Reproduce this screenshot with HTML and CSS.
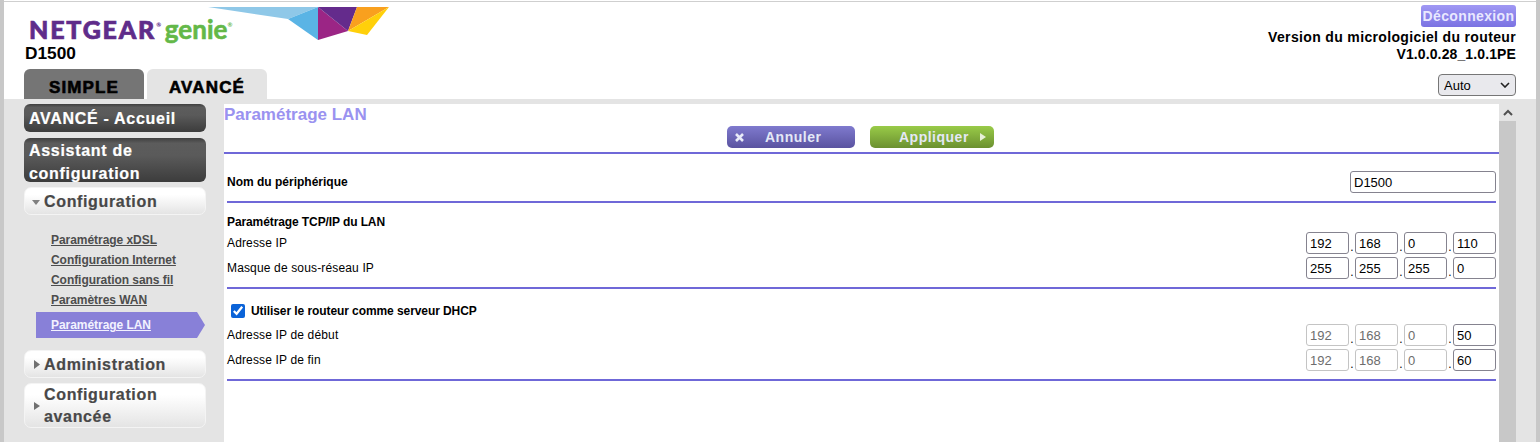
FILE: index.html
```html
<!DOCTYPE html>
<html lang="fr">
<head>
    <meta charset="UTF-8">
    <title>NETGEAR genie - Paramétrage LAN</title>
    <link rel="stylesheet" href="styles.css">
</head>
<body>
    <div class="page">
        <!-- Header -->
        <div class="header">
            <div class="header-left">
                <div class="logo">
                    <span class="logo-netgear">NETGEAR<sup>®</sup></span>
                    <span class="logo-genie">genie<sup>®</sup></span>
                    <svg class="logo-shard" width="182" height="34" viewBox="207 6 182 34">
                        <polygon points="208,7 318,7 288,19" fill="#8fc8e8"/>
                        <polygon points="288,19 318,7 318,40" fill="#5ab4e5"/>
                        <polygon points="318,7 348,31 318,40" fill="#9b2585"/>
                        <polygon points="318,7 357,7 348,31" fill="#642b8c"/>
                        <polygon points="357,7 389,7 348,31" fill="#f9a01e"/>
                        <polygon points="348,31 389,7 367,35" fill="#ffd00a"/>
                    </svg>
                </div>
                <div class="model">D1500</div>
                <div class="tabs">
                    <div class="tab tab-simple">SIMPLE</div>
                    <div class="tab tab-advanced">AVANCÉ</div>
                </div>
            </div>
            <div class="header-right">
                <a class="logout">Déconnexion</a>
                <div class="firmware">Version du micrologiciel du routeur</div>
                <div class="firmware firmware-version">V1.0.0.28_1.0.1PE</div>
                <div class="lang-box">
                    <select class="lang">
                        <option>Auto</option>
                    </select>
                    <svg class="lang-arrow" width="10" height="6" viewBox="0 0 10 6"><path d="M1 1 L5 5 L9 1" fill="none" stroke="#222" stroke-width="1.6"/></svg>
                </div>
            </div>
        </div>

        <div class="panel">
            <!-- Sidebar -->
            <div class="sidebar">
                <div class="nav-dark">AVANCÉ - Accueil</div>
                <div class="nav-dark">Assistant de configuration</div>
                <div class="nav-light">
                    <svg class="arrow" width="8" height="6" viewBox="0 0 8 6"><polygon points="0,1 8,1 4,6" fill="#808080"/></svg>
                    <span>Configuration</span>
                </div>
                <div class="sub-menu">
                    <a class="sub-link">Paramétrage xDSL</a>
                    <a class="sub-link">Configuration Internet</a>
                    <a class="sub-link">Configuration sans fil</a>
                    <a class="sub-link">Paramètres WAN</a>
                    <a class="sub-link sub-link-active">Paramétrage LAN</a>
                </div>
                <div class="nav-light">
                    <svg class="arrow arrow-right" width="6" height="9" viewBox="0 0 6 9"><polygon points="0,0 6,4.5 0,9" fill="#707070"/></svg>
                    <span>Administration</span>
                </div>
                <div class="nav-light nav-light-tall">
                    <svg class="arrow arrow-right" width="6" height="8" viewBox="0 0 6 8"><polygon points="0,0 6,4 0,8" fill="#707070"/></svg>
                    <span>Configuration avancée</span>
                </div>
            </div>

            <!-- Main content -->
            <div class="main">
                <div class="title">Paramétrage LAN</div>
                <div class="actions">
                    <button class="btn btn-cancel">
                        <svg width="9" height="9" viewBox="0 0 9 9"><path d="M1 1 L8 8 M8 1 L1 8" stroke="#e8ebf8" stroke-width="2.6"/></svg>
                        <span>Annuler</span>
                    </button>
                    <button class="btn btn-apply">
                        <span>Appliquer</span>
                        <svg width="6" height="8" viewBox="0 0 6 8"><polygon points="0,0 6,4 0,8" fill="#e8f0d8"/></svg>
                    </button>
                </div>
                <div class="rule rule-top"></div>

                <div class="form">
                    <div class="row row-name">
                        <label class="label-bold">Nom du périphérique</label>
                        <input class="field field-name" type="text" value="D1500">
                    </div>
                    <div class="rule"></div>

                    <div class="section-title">Paramétrage TCP/IP du LAN</div>
                    <div class="row">
                        <label>Adresse IP</label>
                        <div class="ip">
                            <input class="field" type="text" value="192"><span>.</span>
                            <input class="field" type="text" value="168"><span>.</span>
                            <input class="field" type="text" value="0"><span>.</span>
                            <input class="field" type="text" value="110">
                        </div>
                    </div>
                    <div class="row">
                        <label>Masque de sous-réseau IP</label>
                        <div class="ip">
                            <input class="field" type="text" value="255"><span>.</span>
                            <input class="field" type="text" value="255"><span>.</span>
                            <input class="field" type="text" value="255"><span>.</span>
                            <input class="field" type="text" value="0">
                        </div>
                    </div>
                    <div class="rule"></div>

                    <label class="dhcp">
                        <input type="checkbox" checked>
                        <span>Utiliser le routeur comme serveur DHCP</span>
                    </label>
                    <div class="row">
                        <label>Adresse IP de début</label>
                        <div class="ip">
                            <input class="field" type="text" value="192" disabled><span>.</span>
                            <input class="field" type="text" value="168" disabled><span>.</span>
                            <input class="field" type="text" value="0" disabled><span>.</span>
                            <input class="field" type="text" value="50">
                        </div>
                    </div>
                    <div class="row">
                        <label>Adresse IP de fin</label>
                        <div class="ip">
                            <input class="field" type="text" value="192" disabled><span>.</span>
                            <input class="field" type="text" value="168" disabled><span>.</span>
                            <input class="field" type="text" value="0" disabled><span>.</span>
                            <input class="field" type="text" value="60">
                        </div>
                    </div>
                    <div class="rule"></div>
                </div>
            </div>

            <!-- Scrollbar -->
            <div class="scrollbar">
                <div class="scroll-up">
                    <svg width="10" height="7" viewBox="0 0 10 7"><path d="M1 6 L5 2 L9 6" fill="none" stroke="#505050" stroke-width="2"/></svg>
                </div>
            </div>
        </div>
    </div>
</body>
</html>
```

FILE: styles.css
```css
* {
    margin: 0;
    padding: 0;
    box-sizing: border-box;
}

html, body {
    height: 442px;
    overflow: hidden;
}

body {
    background: #fff;
    color: #000;
    font-family: "Liberation Sans", Arial, sans-serif;
}

.page {
    height: 442px;
    border-left: 4px solid #c8c8c8;
    border-right: 4px solid #c8c8c8;
    display: flex;
    flex-direction: column;
}

/* Header */
.header {
    height: 98px;
    margin-top: 1px;
    border-top: 1px solid #cfcfcf;
    padding: 0 20px;
    display: flex;
    justify-content: space-between;
    flex-shrink: 0;
}

.logo {
    position: relative;
    height: 42px;
    padding: 11px 0 0 5px;
    display: flex;
    align-items: baseline;
    white-space: nowrap;
}

.logo sup {
    font-size: 6px;
    vertical-align: 12px;
    line-height: 0;
    -webkit-text-stroke: 0;
}

.logo-netgear {
    font-family: Lato, sans-serif;
    font-weight: 900;
    font-size: 25px;
    letter-spacing: 1.8px;
    color: #5f2c8a;
    -webkit-text-stroke: 0.7px #5f2c8a;
}

.logo-genie {
    font-family: Lato, sans-serif;
    font-weight: 700;
    font-size: 26px;
    margin-left: 2px;
    color: #63b848;
    -webkit-text-stroke: 0.6px #63b848;
}

.logo-shard {
    position: absolute;
    left: 183px;
    top: 4px;
}

.model {
    height: 18px;
    margin-left: 1px;
    font-size: 17.3px;
    line-height: 18px;
    font-weight: bold;
}

.tabs {
    display: flex;
    gap: 3px;
    margin-top: 7px;
}

.tab {
    width: 120px;
    height: 30px;
    border-radius: 6px 6px 0 0;
    padding-top: 9px;
    text-align: center;
    font-size: 17px;
    line-height: 20px;
    font-weight: bold;
    letter-spacing: 1.15px;
    -webkit-text-stroke: 0.6px #000;
}

.tab-simple {
    background: #757575;
}

.tab-advanced {
    background: #e4e4e4;
}

.header-right {
    display: flex;
    flex-direction: column;
    align-items: flex-end;
    padding-top: 3px;
}

.logout {
    width: 95px;
    height: 22px;
    border-radius: 3px;
    background: linear-gradient(#a098f4, #7a72e2);
    color: #e9e8ff;
    font-size: 14px;
    line-height: 22px;
    font-weight: bold;
    letter-spacing: 0.35px;
    text-align: center;
}

.firmware {
    font-size: 14px;
    line-height: 17px;
    font-weight: bold;
    letter-spacing: 0.35px;
}

.logout + .firmware {
    margin-top: 2px;
}

.firmware-version {
    letter-spacing: 0.12px;
}

.lang-box {
    position: relative;
    width: 78px;
    height: 22px;
    margin-top: 11px;
}

.lang {
    appearance: none;
    width: 100%;
    height: 100%;
    padding-left: 5px;
    font-family: "Liberation Sans", Arial, sans-serif;
    font-size: 13px;
    color: #000;
    background-color: #e9e9ed;
    border: 1px solid #767676;
    border-radius: 4px;
}

.lang-arrow {
    position: absolute;
    right: 6px;
    top: 8px;
}

/* Gray panel */
.panel {
    flex: 1;
    min-height: 0;
    display: flex;
    background: #e4e4e4;
    padding: 5px 20px 0;
}

/* Sidebar */
.sidebar {
    width: 182px;
    margin-right: 18px;
    flex-shrink: 0;
}

.nav-dark {
    background: linear-gradient(#3f3f3f, #5c5c5c 12%, #5a5a5a 40%, #3c3c3c);
    border-radius: 6px;
    color: #fff;
    padding: 3px 5px 0;
    margin-bottom: 6px;
    font-size: 16px;
    line-height: 23px;
    font-weight: bold;
    letter-spacing: 0.7px;
    height: 28px;
    -webkit-text-stroke: 0.2px #fff;
}

.nav-dark + .nav-dark {
    height: 44px;
    padding-top: 1px;
    margin-bottom: 5px;
    overflow: hidden;
}

.nav-light {
    min-height: 28px;
    display: flex;
    align-items: center;
    margin-bottom: 5px;
    padding: 1px 6px 0 10px;
    background: linear-gradient(#fff 25%, #e4e4e4);
    border: 1px solid #f4f4f4;
    border-radius: 7px;
    color: #484848;
    font-size: 16px;
    line-height: 22px;
    font-weight: bold;
    letter-spacing: 0.65px;
    -webkit-text-stroke: 0.2px #484848;
}

.nav-light-tall {
    height: 45px;
    padding-top: 0;
}

.arrow {
    flex-shrink: 0;
    margin-right: 4px;
    margin-left: -3px;
}

.arrow-right {
    margin-left: -1px;
    margin-right: 4px;
}

.sub-menu {
    display: flex;
    flex-direction: column;
    padding-top: 10px;
    margin-bottom: 12px;
}

.sub-link {
    height: 20px;
    margin-left: 27px;
    color: #4d4d4d;
    font-size: 12px;
    line-height: 20px;
    font-weight: bold;
    letter-spacing: -0.05px;
    text-decoration: underline;
}

.sub-link-active {
    width: 169px;
    height: 26px;
    margin: 2px 0 0 12px;
    padding-left: 15px;
    background: #8880d8;
    color: #f2f2ff;
    line-height: 26px;
    clip-path: polygon(0 0, 161px 0, 100% 50%, 161px 100%, 0 100%);
}

/* Main */
.main {
    flex: 1;
    min-width: 0;
    background: #fff;
}

.title {
    height: 22px;
    color: #9a92f0;
    font-size: 17px;
    line-height: 22px;
    font-weight: bold;
}

.actions {
    display: flex;
    justify-content: flex-start;
    gap: 15px;
    margin-left: 503px;
}

.btn {
    height: 22px;
    border: none;
    border-radius: 5px;
    display: flex;
    align-items: center;
    font-family: "Liberation Sans", Arial, sans-serif;
    font-size: 14px;
    font-weight: bold;
    letter-spacing: 0.5px;
    color: #e4e8f6;
}

.btn-cancel {
    width: 128px;
    padding-left: 8px;
    gap: 21px;
    background: linear-gradient(#7f7ace, #5a53a0);
}

.btn-apply {
    width: 124px;
    padding-left: 29px;
    gap: 11px;
    background: linear-gradient(#99cb48, #6b9030);
}

/* margin collapses with the 3px under a row */
.rule {
    height: 2px;
    margin-top: 8px;
    background: #6f68d8;
}

.rule-top {
    margin-top: 4px;
}

.form {
    padding: 0 3px;
    font-size: 12px;
}

.row {
    height: 22px;
    margin-bottom: 3px;
    display: flex;
    justify-content: space-between;
    align-items: center;
    letter-spacing: 0.15px;
}

.row-name {
    margin-top: 17px;
    letter-spacing: 0;
}

.label-bold,
.section-title,
.dhcp {
    font-weight: bold;
}

.section-title {
    height: 29px;
    line-height: 38px;
    letter-spacing: -0.1px;
}

.dhcp {
    height: 35px;
    padding: 9px 0 0 4px;
    display: flex;
    align-items: center;
    gap: 6px;
    letter-spacing: -0.08px;
}

.dhcp input {
    width: 14px;
    height: 14px;
    accent-color: #0b63d8;
}

.ip {
    display: flex;
    align-items: flex-end;
}

.ip span {
    width: 6px;
    text-align: center;
    line-height: 14px;
}

.field {
    width: 43px;
    height: 22px;
    padding: 0 3px;
    border: 1px solid #85838f;
    border-radius: 3px;
    font-family: "Liberation Sans", Arial, sans-serif;
    font-size: 13px;
    color: #000;
    background: #fff;
}

.field:disabled {
    border-color: #c4c4c4;
    color: #6d6d6d;
}

.field-name {
    width: 146px;
}

/* Scrollbar */
.scrollbar {
    width: 17px;
    background: #c8c8c8;
    flex-shrink: 0;
}

.scroll-up {
    height: 17px;
    background: #e4e4e4;
    display: flex;
    align-items: center;
    justify-content: center;
}
```
